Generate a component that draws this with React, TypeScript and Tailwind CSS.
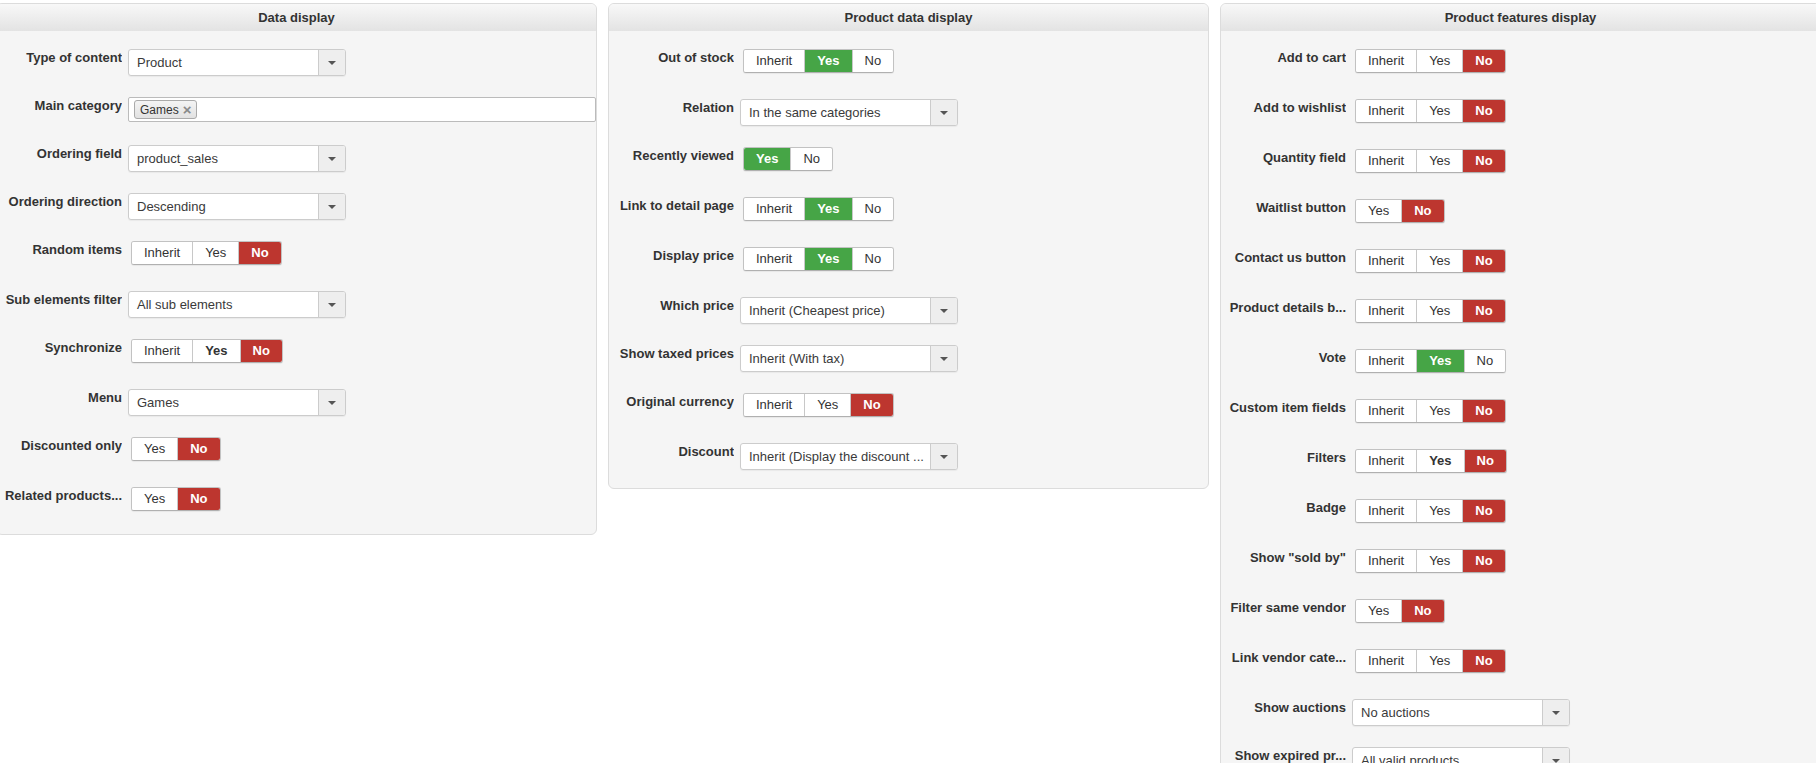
import React from "react";

type Opt = { text: string; tone?: "red" | "green" | "bold" };

function Toggle({ options }: { options: Opt[] }) {
  return (
    <div className="mb-[5px] ml-[3px] flex h-[24px] w-fit overflow-hidden rounded-[3px] border border-[#c2c2c2] border-b-[#b0b0b0] bg-white shadow-[0_1px_1px_rgba(0,0,0,0.06)]">
      {options.map((o, i) => {
        let cls = "bg-white text-[#333]";
        if (o.tone === "red") cls = "bg-[#bd362f] text-white font-bold";
        if (o.tone === "green") cls = "bg-[#46a546] text-white font-bold";
        if (o.tone === "bold") cls = "bg-white text-[#333] font-bold";
        return (
          <span
            key={i}
            className={`flex items-center px-[12px] text-[13px] leading-[18px] ${cls} ${i > 0 ? "border-l border-[#c8c8c8]" : ""}`}
          >
            {o.text}
          </span>
        );
      })}
    </div>
  );
}

const t3 = (active: "yes" | "no", yesBold = false): Opt[] => [
  { text: "Inherit" },
  { text: "Yes", tone: active === "yes" ? "green" : yesBold ? "bold" : undefined },
  { text: "No", tone: active === "no" ? "red" : undefined },
];

const t2 = (active: "yes" | "no"): Opt[] => [
  { text: "Yes", tone: active === "yes" ? "green" : undefined },
  { text: "No", tone: active === "no" ? "red" : undefined },
];

function Select({ value }: { value: string }) {
  return (
    <div className="flex h-[27px] w-[218px] overflow-hidden rounded-[3px] border border-[#cccccc] bg-white shadow-[0_1px_1px_rgba(0,0,0,0.05)]">
      <div className="flex min-w-0 flex-1 items-center truncate pl-[8px] pr-[4px] text-[13px] text-[#3a3a3a]">
        {value}
      </div>
      <div className="flex w-[27px] shrink-0 items-center justify-center border-l border-[#cccccc] bg-[#eeeeee]">
        <span className="h-0 w-0 border-x-[4px] border-t-[4px] border-x-transparent border-t-[#555]" />
      </div>
    </div>
  );
}

function TagInput() {
  return (
    <div className="mb-[2px] flex h-[25px] w-full items-center rounded-[2px] border border-[#bbbbbb] bg-white pl-[5px]">
      <span className="flex h-[19px] items-center gap-[4px] rounded-[3px] border border-[#aaaaaa] bg-gradient-to-b from-[#f4f4f4] to-[#e2e2e2] px-[5px] text-[12px] text-[#333]">
        Games
        <span className="text-[15px] font-bold leading-none text-[#8a8a8a]">×</span>
      </span>
    </div>
  );
}

function Row({ label, children }: { label: string; children: React.ReactNode }) {
  return (
    <div className="flex items-start">
      <div className="ml-[6px] w-[119px] shrink-0 truncate text-right text-[13px] font-bold leading-[18px] text-[#333]">
        {label}
      </div>
      <div className="ml-[6px] min-w-0 flex-1">{children}</div>
    </div>
  );
}

function Panel({ title, children }: { title: string; children: React.ReactNode }) {
  return (
    <div className="w-[601px] shrink-0 self-start overflow-hidden rounded-[6px] border border-[#dcdcdc] bg-[#f5f5f5]">
      <div className="flex h-[27px] items-center justify-center bg-gradient-to-b from-[#f8f8f8] to-[#e3e3e3] text-[13px] font-bold text-[#333]">
        {title}
      </div>
      <div className="flex flex-col gap-[21px] pb-[18px] pt-[18px]">{children}</div>
    </div>
  );
}

export default function App() {
  return (
    <div className="h-[763px] w-full overflow-hidden bg-white font-['Liberation_Sans',Arial,sans-serif]">
      <div className="ml-[-4px] flex gap-[11px] pt-[3px]">
        <Panel title="Data display">
          <Row label="Type of content"><Select value="Product" /></Row>
          <Row label="Main category"><TagInput /></Row>
          <Row label="Ordering field"><Select value="product_sales" /></Row>
          <Row label="Ordering direction"><Select value="Descending" /></Row>
          <Row label="Random items"><Toggle options={t3("no")} /></Row>
          <Row label="Sub elements filter"><Select value="All sub elements" /></Row>
          <Row label="Synchronize"><Toggle options={t3("no", true)} /></Row>
          <Row label="Menu"><Select value="Games" /></Row>
          <Row label="Discounted only"><Toggle options={t2("no")} /></Row>
          <Row label="Related products..."><Toggle options={t2("no")} /></Row>
        </Panel>

        <Panel title="Product data display">
          <Row label="Out of stock"><Toggle options={t3("yes")} /></Row>
          <Row label="Relation"><Select value="In the same categories" /></Row>
          <Row label="Recently viewed"><Toggle options={t2("yes")} /></Row>
          <Row label="Link to detail page"><Toggle options={t3("yes")} /></Row>
          <Row label="Display price"><Toggle options={t3("yes")} /></Row>
          <Row label="Which price"><Select value="Inherit (Cheapest price)" /></Row>
          <Row label="Show taxed prices"><Select value="Inherit (With tax)" /></Row>
          <Row label="Original currency"><Toggle options={t3("no")} /></Row>
          <Row label="Discount"><Select value="Inherit (Display the discount ..." /></Row>
        </Panel>

        <Panel title="Product features display">
          <Row label="Add to cart"><Toggle options={t3("no")} /></Row>
          <Row label="Add to wishlist"><Toggle options={t3("no")} /></Row>
          <Row label="Quantity field"><Toggle options={t3("no")} /></Row>
          <Row label="Waitlist button"><Toggle options={t2("no")} /></Row>
          <Row label="Contact us button"><Toggle options={t3("no")} /></Row>
          <Row label="Product details b..."><Toggle options={t3("no")} /></Row>
          <Row label="Vote"><Toggle options={t3("yes")} /></Row>
          <Row label="Custom item fields"><Toggle options={t3("no")} /></Row>
          <Row label="Filters"><Toggle options={t3("no", true)} /></Row>
          <Row label="Badge"><Toggle options={t3("no")} /></Row>
          <Row label={'Show "sold by"'}><Toggle options={t3("no")} /></Row>
          <Row label="Filter same vendor"><Toggle options={t2("no")} /></Row>
          <Row label="Link vendor cate..."><Toggle options={t3("no")} /></Row>
          <Row label="Show auctions"><Select value="No auctions" /></Row>
          <Row label="Show expired pr..."><Select value="All valid products" /></Row>
        </Panel>
      </div>
    </div>
  );
}
